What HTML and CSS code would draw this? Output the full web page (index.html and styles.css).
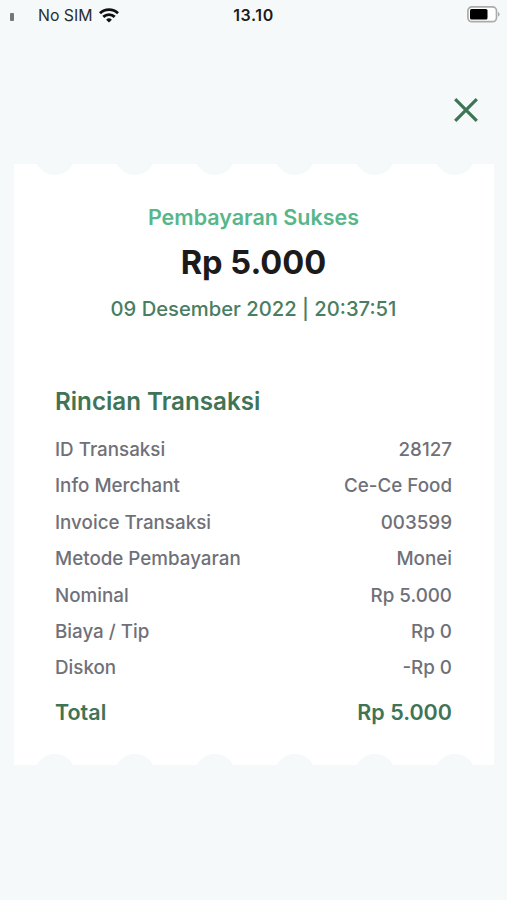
FILE: index.html
```html
<!DOCTYPE html>
<html lang="id">
<head>
<meta charset="utf-8">
<title>Pembayaran Sukses</title>
<link rel="stylesheet" href="styles.css">
</head>
<body>
<header class="status">
  <div class="carrier">
    <span class="signal"></span>
    <span class="sim">No SIM</span>
    <svg class="wifi" width="20" height="15" viewBox="0 0 20 15" fill="none" stroke="#111" stroke-width="2.9">
      <path d="M1 5.2a13 13 0 0 1 18 0"/>
      <path d="M4.300 8.900a8.300 8.300 0 0 1 11.400 0"/>
      <path d="M10 14.600 7.100 11.700a4.200 4.200 0 0 1 5.800 0z" fill="#111" stroke="none"/>
    </svg>
  </div>
  <time class="clock">13.10</time>
  <svg class="battery" width="33" height="17" viewBox="0 0 33 17">
    <rect x=".9" y=".9" width="28.6" height="14.8" rx="4" fill="#fff" stroke="#aaacac" stroke-width="1.7"/>
    <rect x="3" y="3" width="17.5" height="10.6" rx="1.6" fill="#000"/>
    <path d="M31 6q1.6.6 1.6 2.3T31 10.600z" fill="#aaacac"/>
  </svg>
</header>
<nav class="toolbar">
  <button class="close" aria-label="Tutup">
    <svg width="24" height="24" viewBox="0 0 24 24" fill="none" stroke="#3f7456" stroke-width="3.2"><path d="M1.200 1.200 22.800 22.800M22.800 1.200 1.200 22.800"/></svg>
  </button>
</nav>
<main class="receipt">
  <section class="summary">
    <p class="result">Pembayaran Sukses</p>
    <p class="amount">Rp 5.000</p>
    <p class="date">09 Desember 2022 | 20:37:51</p>
  </section>
  <section class="details">
    <h2 class="heading">Rincian Transaksi</h2>
    <dl class="rows">
      <div class="row"><dt>ID Transaksi</dt><dd>28127</dd></div>
      <div class="row"><dt>Info Merchant</dt><dd>Ce-Ce Food</dd></div>
      <div class="row"><dt>Invoice Transaksi</dt><dd>003599</dd></div>
      <div class="row"><dt>Metode Pembayaran</dt><dd>Monei</dd></div>
      <div class="row"><dt>Nominal</dt><dd>Rp 5.000</dd></div>
      <div class="row"><dt>Biaya / Tip</dt><dd>Rp 0</dd></div>
      <div class="row"><dt>Diskon</dt><dd>-Rp 0</dd></div>
      <div class="row total"><dt>Total</dt><dd>Rp 5.000</dd></div>
    </dl>
  </section>
</main>
</body>
</html>
```
FILE: styles.css
```css
* { box-sizing: border-box; }
body {
  margin: 0;
  min-height: 900px;
  background: #f5f9fa;
  font-family: Inter, "Liberation Sans", sans-serif;
  color: #1c1a1b;
}
p, h2, dl, dd { margin: 0; }
.status {
  display: grid;
  grid-template-columns: 1fr auto 1fr;
  align-items: center;
  height: 30px;
  padding: 0 7px 0 10px;
}
.carrier { display: flex; align-items: center; }
.signal { width: 4px; height: 8px; margin: 4px 24px 0 0; border-radius: 1px; background: #747778; }
.sim { font-size: 15.8px; color: #2b2c2d; }
.wifi { margin-left: 7px; }
.clock { margin-right: 3px; font-size: 16px; font-weight: 600; letter-spacing: 0.6px; }
.battery { justify-self: end; margin-top: -1px; }
.toolbar { display: flex; justify-content: flex-end; height: 134px; padding: 68px 29px 0 0; }
.close { display: block; width: 24px; height: 24px; padding: 0; border: 0; background: none; }
.close svg { display: block; }
.receipt {
  width: 480px;
  height: 601px;
  margin-left: 14px;
  padding: 37px 42px 0 41px;
  background:
    radial-gradient(circle at 41px -9px, #f5f9fa 19.700px, transparent 20.500px) 0 0 / 80px 20px repeat-x,
    radial-gradient(circle at 41px 29px, #f5f9fa 19.700px, transparent 20.500px) 0 100% / 80px 20px repeat-x,
    #fff;
}
.summary { display: flex; flex-direction: column; align-items: center; white-space: nowrap; }
.result { font-size: 21.500px; line-height: 33px; font-weight: 600; color: #58b68b; }
.amount { font-size: 32.600px; line-height: 57px; font-weight: 700; }
.date { font-size: 20.200px; line-height: 36px; font-weight: 500; color: #4a7d61; }
.heading { margin-top: 59px; font-size: 24.200px; line-height: 32px; font-weight: 600; color: #3f7456; }
.rows { margin-top: 14px; }
.row { display: flex; justify-content: space-between; font-size: 18.800px; line-height: 36.400px; font-weight: 500; color: #707078; }
.total { margin-top: 7px; font-size: 21.500px; font-weight: 600; color: #3f7456; }
```
